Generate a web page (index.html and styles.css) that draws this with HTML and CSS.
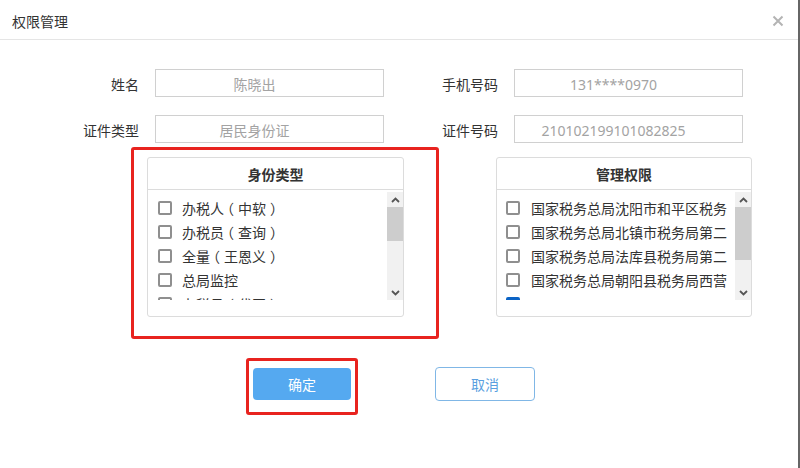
FILE: index.html
```html
<!DOCTYPE html>
<html lang="zh-CN">
<head>
<meta charset="utf-8">
<title>权限管理</title>
<link rel="stylesheet" href="styles.css">
</head>
<body>
<div class="dialog">
  <div class="header">
    <span class="title">权限管理</span>
    <span class="close" aria-label="关闭">
      <svg width="12" height="12" viewBox="0 0 12 12"><path d="M1.5 1.5 L10.5 10.5 M10.5 1.5 L1.5 10.5" stroke="#b4b4b4" stroke-width="2" fill="none"/></svg>
    </span>
  </div>

  <div class="form">
    <div class="row">
      <div class="field"><span class="lbl">姓名</span><div class="input">陈晓出</div></div>
      <div class="field"><span class="lbl">手机号码</span><div class="input">131****0970</div></div>
    </div>
    <div class="row">
      <div class="field"><span class="lbl">证件类型</span><div class="input">居民身份证</div></div>
      <div class="field"><span class="lbl">证件号码</span><div class="input">210102199101082825</div></div>
    </div>
  </div>

  <div class="panels">
    <div class="panel">
      <div class="panel-head">身份类型</div>
      <div class="panel-body">
        <div class="list">
          <div class="item"><span class="cb"></span><span class="txt">办税人<span class="po">（</span>中软<span class="pc">）</span></span></div>
          <div class="item"><span class="cb"></span><span class="txt">办税员<span class="po">（</span>查询<span class="pc">）</span></span></div>
          <div class="item"><span class="cb"></span><span class="txt">全量<span class="po">（</span>王恩义<span class="pc">）</span></span></div>
          <div class="item"><span class="cb"></span><span class="txt">总局监控</span></div>
          <div class="item"><span class="cb"></span><span class="txt">办税员<span class="po">（</span>代开<span class="pc">）</span></span></div>
        </div>
        <div class="sbar">
          <div class="arrow"><svg width="9" height="6" viewBox="0 0 9 6"><path d="M1 5 L4.5 1.5 L8 5" stroke="#555" stroke-width="1.8" fill="none"/></svg></div>
          <div class="track"><div class="thumb thumb-a"></div></div>
          <div class="arrow"><svg width="9" height="6" viewBox="0 0 9 6"><path d="M1 1 L4.5 4.5 L8 1" stroke="#555" stroke-width="1.8" fill="none"/></svg></div>
        </div>
      </div>
    </div>

    <div class="panel">
      <div class="panel-head">管理权限</div>
      <div class="panel-body">
        <div class="list">
          <div class="item"><span class="cb"></span><span class="txt long">国家税务总局沈阳市和平区税务局</span></div>
          <div class="item"><span class="cb"></span><span class="txt long">国家税务总局北镇市税务局第二税务所</span></div>
          <div class="item"><span class="cb"></span><span class="txt long">国家税务总局法库县税务局第二税务所</span></div>
          <div class="item"><span class="cb"></span><span class="txt long">国家税务总局朝阳县税务局西营子税务所</span></div>
          <div class="item"><span class="cb checked"></span><span class="txt long">"、"、"</span></div>
        </div>
        <div class="sbar">
          <div class="arrow"><svg width="9" height="6" viewBox="0 0 9 6"><path d="M1 5 L4.5 1.5 L8 5" stroke="#555" stroke-width="1.8" fill="none"/></svg></div>
          <div class="track"><div class="thumb thumb-b"></div></div>
          <div class="arrow"><svg width="9" height="6" viewBox="0 0 9 6"><path d="M1 1 L4.5 4.5 L8 1" stroke="#555" stroke-width="1.8" fill="none"/></svg></div>
        </div>
      </div>
    </div>
  </div>

  <div class="actions">
    <button class="btn primary">确定</button>
    <button class="btn ghost">取消</button>
  </div>

  <div class="mark mark-panel"></div>
  <div class="mark mark-btn"></div>
</div>
</body>
</html>
```

FILE: styles.css
```css
html, body {
  margin: 0;
  padding: 0;
  background: #fff;
}

body {
  font-family: "Noto Sans", "Noto Sans CJK SC", sans-serif;
  font-size: 14px;
  color: #333;
}

.dialog {
  position: relative;
  width: 800px;
  height: 468px;
  box-sizing: border-box;
  border-right: 2px solid #666;
  overflow: hidden;
}

.header {
  height: 37px;
  border-bottom: 1px solid #e5e5e5;
  display: flex;
  align-items: center;
  justify-content: space-between;
  padding: 2px 14px 0 12px;
}

.title {
  font-size: 14px;
  color: #333;
}

.close {
  display: flex;
  width: 12px;
  height: 12px;
}

.form {
  padding: 29px 0 0 59px;
  display: flex;
  flex-direction: column;
  gap: 18px;
}

.row {
  display: flex;
  gap: 34px;
}

.field {
  display: flex;
  height: 28px;
}

.lbl {
  width: 80px;
  height: 28px;
  box-sizing: border-box;
  margin-right: 16px;
  text-align: right;
  line-height: 25px;
  padding-top: 3px;
  color: #333;
}

.input {
  width: 229px;
  height: 28px;
  box-sizing: border-box;
  border: 1px solid #d0d0d0;
  text-align: center;
  padding: 3px 30px 0 0;
  line-height: 23px;
  color: #a3a3a3;
  font-size: 14px;
}

.panels {
  display: flex;
  gap: 92px;
  padding: 14px 0 0 147px;
}

.panel {
  width: 257px;
  box-sizing: border-box;
  border: 1px solid #dcdcdc;
  border-radius: 3px;
  padding-bottom: 16px;
}

.panel + .panel {
  width: 256px;
}

.panel-head {
  height: 32px;
  line-height: 29px;
  padding-top: 2px;
  box-sizing: border-box;
  border-bottom: 1px solid #dcdcdc;
  text-align: center;
  font-weight: bold;
  color: #333;
}

.panel-body {
  margin-top: 2px;
  height: 108px;
  display: flex;
}

.list {
  flex: 1;
  overflow: hidden;
  padding: 4px 0 0 10px;
  box-sizing: border-box;
}

.panel + .panel .list {
  padding-left: 9px;
}

.item {
  height: 24px;
  display: flex;
  align-items: center;
  white-space: nowrap;
}

.cb {
  flex: none;
  width: 14px;
  height: 14px;
  box-sizing: border-box;
  border: 2px solid #8f8f8f;
  border-radius: 2px;
  margin-right: 10px;
}

.panel + .panel .cb {
  margin-right: 11px;
}

.cb.checked {
  background: #0b63c5;
  border-color: #0b63c5;
}

.txt {
  line-height: 24px;
  padding-top: 1px;
  color: #333;
}

.po {
  margin-left: -4px;
  margin-right: 4px;
}

.pc {
  margin-left: 4px;
  margin-right: -4px;
}

.txt.long {
  display: block;
  width: 196px;
  overflow: hidden;
}

.sbar {
  width: 16px;
  flex: none;
  background: #f1f1f1;
  display: flex;
  flex-direction: column;
}

.arrow {
  height: 15px;
  display: flex;
  align-items: center;
  justify-content: center;
  flex: none;
}

.track {
  flex: 1;
}

.thumb {
  background: #cdcdcd;
}

.thumb-a {
  height: 34px;
}

.thumb-b {
  height: 53px;
}

.actions {
  display: flex;
  align-items: center;
  gap: 84px;
  padding: 50px 0 0 253px;
}

.btn {
  font-family: "Noto Sans", "Noto Sans CJK SC", sans-serif;
  font-size: 14px;
  border-radius: 4px;
  cursor: pointer;
  padding: 0;
}

.btn.primary {
  width: 98px;
  height: 32px;
  background: #55a9f0;
  border: none;
  color: #fff;
}

.btn.ghost {
  width: 100px;
  height: 34px;
  background: #fff;
  border: 1px solid #80b7e6;
  color: #5a9fe0;
}

.mark {
  position: absolute;
  border: 3px solid #e8231f;
  border-radius: 3px;
  box-sizing: border-box;
  pointer-events: none;
}

.mark-panel {
  left: 131px;
  top: 147px;
  width: 308px;
  height: 192px;
}

.mark-btn {
  left: 246px;
  top: 358px;
  width: 112px;
  height: 57px;
}
```
